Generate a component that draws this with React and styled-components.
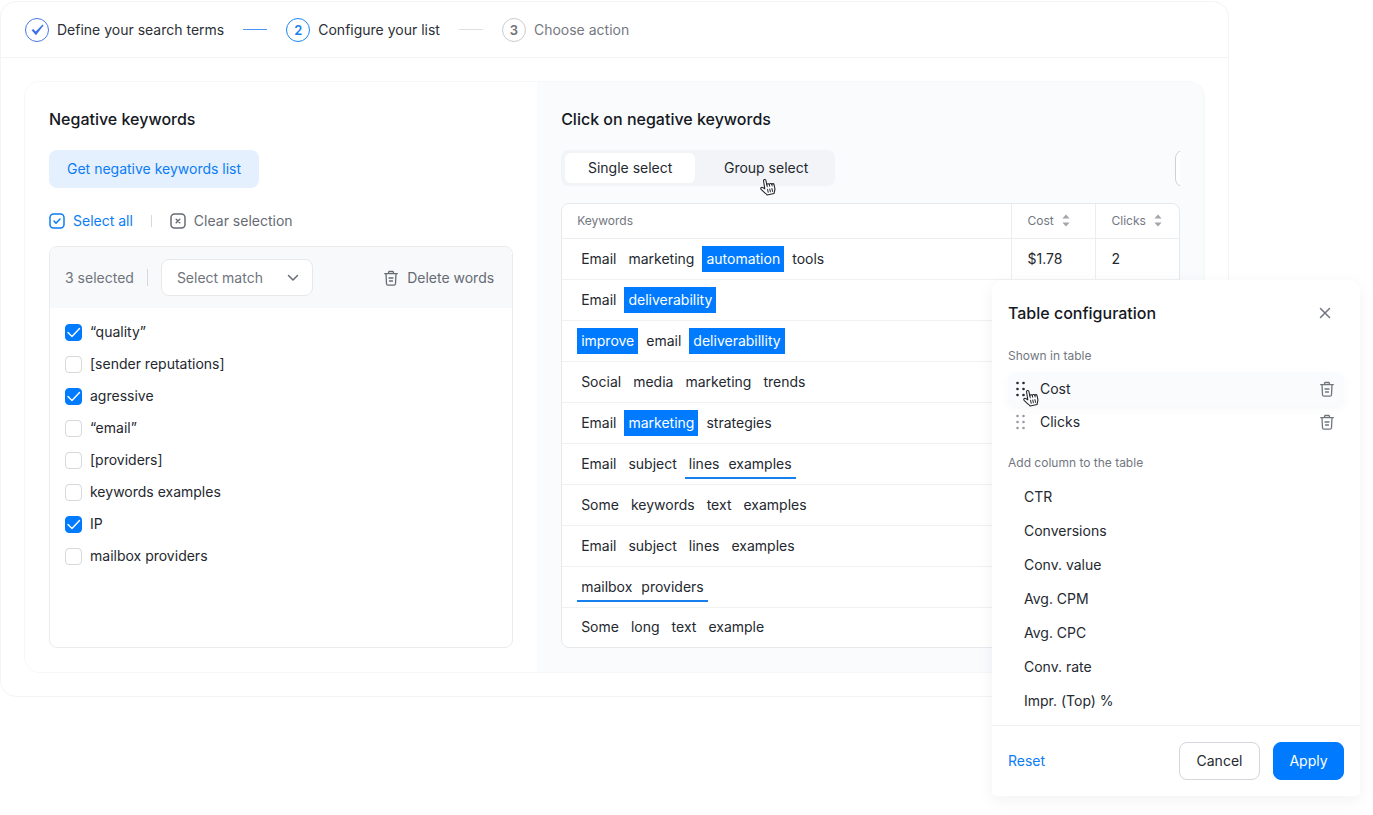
import React from "react";
import styled, { createGlobalStyle } from "styled-components";

const GlobalStyle = createGlobalStyle`
  *, *::before, *::after { box-sizing: border-box; }
  body {
    margin: 0;
    background: #fff;
    color: #24282f;
    font: 400 14px/20px Inter, "Liberation Sans", sans-serif;
  }
  button, select, input { font: inherit; margin: 0; }
  button { border: 0; padding: 0; background: none; color: inherit; white-space: nowrap; }
  h2, p, ul, ol { margin: 0; padding: 0; list-style: none; }
`;

const Page = styled.div`
  position: relative;
  padding: 1px 144px 118px 0;
`;

const Window = styled.main`
  border: 1px solid #f3f4f5;
  border-radius: 16px;
`;

const Steps = styled.ol`
  display: flex;
  align-items: center;
  gap: 19px;
  height: 56px;
  padding: 0 24px;
  border-bottom: 1px solid #f3f4f5;
`;

const Step = styled.li`
  display: flex;
  align-items: center;
  gap: 8px;
  font-size: 14px;
  color: ${(p) => (p.$muted ? "#75797f" : "#2b2f36")};
`;

const StepMark = styled.span`
  display: grid;
  place-items: center;
  width: 24px;
  height: 24px;
  border: 1px solid ${(p) => (p.$muted ? "#c9cbce" : p.$done ? "#4a76e8" : "#1a86f5")};
  border-radius: 50%;
  color: ${(p) => (p.$muted ? "#6d7178" : "#1a80f0")};
  font-size: 13px;
  font-weight: 600;
`;

const StepLine = styled.li`
  width: 24px;
  height: 1px;
  background: ${(p) => (p.$muted ? "#dcdfe2" : "#4a94f5")};
`;

const Workspace = styled.div`
  display: grid;
  grid-template-columns: 513fr 668fr;
  margin: 23px;
  border: 1px solid #f6f7f8;
  border-radius: 16px;
  overflow: hidden;
`;

const Pane = styled.section`
  display: flex;
  flex-direction: column;
  min-width: 0;
  padding: 24px;
  background: ${(p) => (p.$tinted ? "#f9fbfd" : "#fff")};
`;

const Heading = styled.h2`
  font-size: 16px;
  font-weight: 500;
  line-height: 26px;
  color: #15181e;
`;

const ListButton = styled.button`
  align-self: flex-start;
  height: 38px;
  margin-top: 18px;
  padding: 0 18px;
  border-radius: 8px;
  background: #e5f0fe;
  color: #0a7cf5;
`;

const Actions = styled.div`
  display: flex;
  align-items: center;
  gap: 18px;
  height: 24px;
  margin: 21px 0 13px;
`;

const IconButton = styled.button`
  display: flex;
  align-items: center;
  gap: 8px;
  color: ${(p) => (p.$primary ? "#0a7cf5" : "#666b74")};
`;

const Divider = styled.span`
  width: 1px;
  height: ${(p) => (p.$tall ? "17px" : "12px")};
  background: #d5d8dc;
`;

const WordBox = styled.div`
  flex: 1;
  border: 1px solid #e9ebed;
  border-radius: 8px;
  overflow: hidden;
`;

const WordTools = styled.div`
  display: flex;
  align-items: center;
  gap: 13px;
  height: 61px;
  padding: 0 18px 0 15px;
  background: #f7f9fb;
  color: #6f747c;

  > :last-child { margin-left: auto; }
`;

const SelectWrap = styled.label`
  position: relative;
  display: block;

  svg {
    position: absolute;
    right: 14px;
    top: 15px;
    pointer-events: none;
  }
`;

const Select = styled.select`
  appearance: none;
  display: block;
  width: 152px;
  height: 37px;
  padding: 0 36px 0 15px;
  border: 1px solid #e6e8ea;
  border-radius: 8px;
  background: #fff;
  color: #6f747c;
`;

const WordList = styled.ul`
  padding: 8px 15px;
`;

const WordLabel = styled.label`
  display: flex;
  align-items: center;
  gap: 8px;
  height: 32px;
`;

const CheckWrap = styled.span`
  display: grid;
  width: 17px;
  height: 17px;

  > * { grid-area: 1 / 1; }
  svg { pointer-events: none; z-index: 1; }
`;

const Check = styled.input`
  appearance: none;
  width: 17px;
  height: 17px;
  border: 1px solid #d5d8dc;
  border-radius: 4px;
  background: #fff;

  &:checked { border-color: #007bff; background: #007bff; }
  & + svg { display: none; }
  &:checked + svg { display: block; }
`;

const ModeBar = styled.div`
  display: flex;
  justify-content: space-between;
  align-items: flex-start;
  height: 37px;
  margin: 18px 0 16px;
`;

const Segments = styled.div`
  display: flex;
  padding: 3px 4px;
  border-radius: 8px;
  background: #f2f4f7;
`;

const Segment = styled.button`
  position: relative;
  width: ${(p) => (p.$active ? "130px" : "136px")};
  height: 30px;
  border-radius: 6px;
  background: ${(p) => (p.$active ? "#fff" : "transparent")};
  ${(p) => !p.$active && "padding-left: 6px;"}
`;

const MoreClip = styled.div`
  width: 5px;
  overflow: hidden;
`;

const MoreButton = styled.button`
  display: block;
  width: 38px;
  height: 37px;
  border: 1px solid #ced1d5;
  border-radius: 8px;
  background: #fff;
`;

const TableBox = styled.div`
  border: 1px solid #e6e9ec;
  border-radius: 8px;
  background: #fff;
  overflow: hidden;
`;

const Table = styled.table`
  width: 100%;
  border-collapse: collapse;
  table-layout: fixed;

  th, td {
    padding: 0 16px;
    text-align: left;
    font-weight: 400;
  }
  th {
    height: 34px;
    border-bottom: 1px solid #ebedef;
    color: #72777f;
    font-size: 12px;
  }
  td { height: 41px; border-bottom: 1px solid #f0f1f3; }
  th + th, td + td { border-left: 1px solid #ebedef; }
  td:first-child, th:first-child { padding: 0 15px; }
  tr:last-child td { height: 40px; border-bottom: 0; }
`;

const Column = styled.col`
  width: ${(p) => (p.$narrow ? "84px" : "auto")};
`;

const Sort = styled.button`
  display: flex;
  align-items: center;
  gap: 8px;
`;

const Phrase = styled.div`
  display: flex;
  align-items: center;
  gap: 4px;
`;

const Word = styled.button`
  height: 26px;
  padding: 0 4px;
  background: ${(p) => (p.$on ? "#007bff" : "transparent")};
  color: ${(p) => (p.$on ? "#fff" : "inherit")};
`;

const WordGroup = styled.button`
  display: flex;
  align-items: center;
  gap: 9px;
  height: 30px;
  padding: 0 4px;
  border: solid transparent;
  border-width: 2px 0;
  border-bottom-color: #1580ee;
`;

const Dialog = styled.section`
  position: absolute;
  top: 280px;
  right: 13px;
  width: 368px;
  border-radius: 12px 12px 4px 4px;
  background: #fff;
  box-shadow: 0 4px 16px rgba(30, 40, 60, 0.06);
`;

const DialogHead = styled.header`
  display: flex;
  align-items: center;
  justify-content: space-between;
  height: 66px;
  padding: 0 29px 0 16px;
`;

const DialogBody = styled.div`
  padding: 0 16px 7px;
`;

const Caption = styled.p`
  font-size: 12px;
  color: #72777f;
`;

const Shown = styled.ul`
  padding: 6px 0 15px;
`;

const ShownRow = styled.li`
  position: relative;
  display: flex;
  align-items: center;
  height: 33px;
  padding: 0 9px 0 8px;
  border-radius: 8px;
  background: ${(p) => (p.$active ? "#fafbfd" : "transparent")};
  box-shadow: ${(p) => (p.$active ? "0 4px 8px rgba(60, 80, 110, 0.04)" : "none")};
  color: ${(p) => (p.$active ? "#24282f" : "#969ba3")};
`;

const ShownName = styled.span`
  flex: 1;
  margin-left: 15px;
  color: #24282f;
`;

const RemoveButton = styled.button`
  display: flex;
  color: #70757d;
`;

const Options = styled.ul`
  padding-top: 7px;
`;

const Option = styled.button`
  display: block;
  width: 100%;
  height: 34px;
  padding-left: 16px;
  text-align: left;
`;

const DialogFoot = styled.footer`
  display: flex;
  align-items: center;
  gap: 13px;
  padding: 16px;
  border-top: 1px solid #eff0f2;
`;

const Reset = styled.button`
  margin-right: auto;
  color: #0a7cf5;
`;

const FootButton = styled.button`
  width: ${(p) => (p.$primary ? "71px" : "81px")};
  height: 38px;
  border: 1px solid ${(p) => (p.$primary ? "#007bff" : "#d3d6da")};
  border-radius: 8px;
  background: ${(p) => (p.$primary ? "#007bff" : "#fff")};
  color: ${(p) => (p.$primary ? "#fff" : "#24282f")};
`;

const Pointer = styled.svg`
  position: absolute;
  left: ${(p) => p.$left};
  top: ${(p) => p.$top};
  z-index: 2;
`;

const Hand = (props) => (
  <Pointer width="18" height="19" viewBox="0 0 18 19" fill="none" aria-hidden="true" {...props}>
    <g transform="rotate(-12 9 9.500)">
      <path
        d="M5.400 11.200 4 9.700c-.7-.7-1.600-.9-2.200-.3-.5.500-.4 1.200 0 1.800l3 4.100c.5.800 1.300 1.300 1.500 2.300h7.200c.1-1.300 1.800-2.900 1.800-4.800V8.900c0-1.400-1.800-1.600-2.100-.5 0-1.500-2.200-1.700-2.500-.5-.2-1.300-2.300-1.400-2.500-.2V3.200c0-1.700-2.400-1.700-2.400 0z"
        fill="#fff"
        stroke="#22252a"
        strokeWidth="1.100"
        strokeLinejoin="round"
      />
      <path d="M8.200 7.600v2M10.700 8v1.600M13.200 8.400v1.400M8 12.200v3M10.200 12.200v3M12.400 12.200v3" stroke="#22252a" strokeLinecap="round" />
    </g>
  </Pointer>
);

const Trash = () => (
  <svg width="16" height="16" viewBox="0 0 16 16" fill="none" stroke="currentColor" strokeWidth="1.300" strokeLinecap="round" strokeLinejoin="round" aria-hidden="true">
    <path d="M1.700 3.600h12.600M5.300 3.400l.6-1.900h4.200l.6 1.900M3 3.800l.5 9.900c.1 1 .6 1.500 1.500 1.500h6c.9 0 1.400-.5 1.500-1.500l.5-9.900M6 8h4M6.500 11h3" />
  </svg>
);

const BoxIcon = ({ cross }) => (
  <svg width="16" height="16" viewBox="0 0 16 16" fill="none" stroke="currentColor" strokeWidth="1.500" strokeLinecap="round" strokeLinejoin="round" aria-hidden="true">
    <rect x="1" y="1" width="14" height="14" rx="3.500" />
    <path d={cross ? "m6.200 6.200 3.600 3.600m0-3.600-3.600 3.600" : "m5 8 2 2.200L11 6"} />
  </svg>
);

const SortIcon = () => (
  <svg width="8" height="13" viewBox="0 0 8 13" fill="#a2a5aa" aria-hidden="true">
    <path d="M4 .4 7.600 4.600H.4zM4 12.600.4 8.400h7.200z" />
  </svg>
);

const Grip = () => (
  <svg width="9" height="16" viewBox="0 0 9 16" fill="currentColor" aria-hidden="true">
    {[2, 8, 14].map((y) => (
      <React.Fragment key={y}>
        <circle cx="1.500" cy={y} r="1.300" />
        <circle cx="7.500" cy={y} r="1.300" />
      </React.Fragment>
    ))}
  </svg>
);

const words = [
  ["“quality”", true],
  ["[sender reputations]", false],
  ["agressive", true],
  ["“email”", false],
  ["[providers]", false],
  ["keywords examples", false],
  ["IP", true],
  ["mailbox providers", false],
];

// "*" marks a selected word, an array is a selected group of words.
const phrases = [
  ["Email", "marketing", "*automation", "tools"],
  ["Email", "*deliverability"],
  ["*improve", "email", "*deliverabillity"],
  ["Social", "media", "marketing", "trends"],
  ["Email", "*marketing", "strategies"],
  ["Email", "subject", ["lines", "examples"]],
  ["Some", "keywords", "text", "examples"],
  ["Email", "subject", "lines", "examples"],
  [["mailbox", "providers"]],
  ["Some", "long", "text", "example"],
];

const columns = ["CTR", "Conversions", "Conv. value", "Avg. CPM", "Avg. CPC", "Conv. rate", "Impr. (Top) %"];

export default function App() {
  return (
    <>
      <GlobalStyle />
      <Page>
        <Window>
          <Steps>
            <Step>
              <StepMark $done>
                <svg width="13" height="12" viewBox="0 0 13 12" aria-hidden="true">
                  <path d="M.6 6.200 2.200 5l2.500 2.600L11.600.6l1 .7-7.600 9.900z" fill="#3c70e8" />
                </svg>
              </StepMark>
              Define your search terms
            </Step>
            <StepLine aria-hidden="true" />
            <Step>
              <StepMark>2</StepMark>
              Configure your list
            </Step>
            <StepLine $muted aria-hidden="true" />
            <Step $muted>
              <StepMark $muted>3</StepMark>
              Choose action
            </Step>
          </Steps>
          <Workspace>
            <Pane>
              <Heading>Negative keywords</Heading>
              <ListButton>Get negative keywords list</ListButton>
              <Actions>
                <IconButton $primary><BoxIcon />Select all</IconButton>
                <Divider />
                <IconButton><BoxIcon cross />Clear selection</IconButton>
              </Actions>
              <WordBox>
                <WordTools>
                  <span>3 selected</span>
                  <Divider $tall />
                  <SelectWrap>
                    <Select aria-label="Select match">
                      <option>Select match</option>
                    </Select>
                    <svg width="12" height="8" viewBox="0 0 12 8" fill="none" stroke="#666b74" strokeWidth="1.500" strokeLinecap="round" strokeLinejoin="round" aria-hidden="true">
                      <path d="m1.500 1.500 4.500 4.500 4.500-4.500" />
                    </svg>
                  </SelectWrap>
                  <IconButton><Trash />Delete words</IconButton>
                </WordTools>
                <WordList>
                  {words.map(([text, checked]) => (
                    <li key={text}>
                      <WordLabel>
                        <CheckWrap>
                          <Check type="checkbox" defaultChecked={checked} />
                          <svg width="17" height="17" viewBox="0 0 17 17" fill="none" stroke="#fff" strokeWidth="1.400" strokeLinecap="round" strokeLinejoin="round" aria-hidden="true">
                            <path d="m3 8.500 4 4 7.500-8" />
                          </svg>
                        </CheckWrap>
                        {text}
                      </WordLabel>
                    </li>
                  ))}
                </WordList>
              </WordBox>
            </Pane>
            <Pane $tinted>
              <Heading>Click on negative keywords</Heading>
              <ModeBar>
                <Segments>
                  <Segment $active aria-pressed="true">Single select</Segment>
                  <Segment aria-pressed="false">
                    Group select
                    <Hand $left="64px" $top="24px" />
                  </Segment>
                </Segments>
                <MoreClip><MoreButton aria-label="Table settings" /></MoreClip>
              </ModeBar>
              <TableBox>
                <Table>
                  <colgroup>
                    <Column />
                    <Column $narrow />
                    <Column $narrow />
                  </colgroup>
                  <thead>
                    <tr>
                      <th>Keywords</th>
                      <th><Sort>Cost<SortIcon /></Sort></th>
                      <th><Sort>Clicks<SortIcon /></Sort></th>
                    </tr>
                  </thead>
                  <tbody>
                    {phrases.map((phrase, row) => (
                      <tr key={row}>
                        <td>
                          <Phrase>
                            {phrase.map((word, i) =>
                              Array.isArray(word) ? (
                                <WordGroup key={i}>
                                  {word.map((w) => <span key={w}>{w}</span>)}
                                </WordGroup>
                              ) : (
                                <Word key={i} $on={word[0] === "*"}>{word.replace("*", "")}</Word>
                              )
                            )}
                          </Phrase>
                        </td>
                        <td>{row === 0 && "$1.78"}</td>
                        <td>{row === 0 && "2"}</td>
                      </tr>
                    ))}
                  </tbody>
                </Table>
              </TableBox>
            </Pane>
          </Workspace>
        </Window>
        <Dialog role="dialog" aria-labelledby="config-title">
          <DialogHead>
            <Heading id="config-title">Table configuration</Heading>
            <RemoveButton aria-label="Close">
              <svg width="12" height="12" viewBox="0 0 12 12" fill="none" stroke="currentColor" strokeWidth="1.500" strokeLinecap="round" aria-hidden="true">
                <path d="m1.500 1.500 9 9m0-9-9 9" />
              </svg>
            </RemoveButton>
          </DialogHead>
          <DialogBody>
            <Caption>Shown in table</Caption>
            <Shown>
              <ShownRow $active>
                <Grip />
                <ShownName>Cost</ShownName>
                <RemoveButton aria-label="Remove Cost"><Trash /></RemoveButton>
                <Hand $left="14px" $top="16px" />
              </ShownRow>
              <ShownRow>
                <Grip />
                <ShownName>Clicks</ShownName>
                <RemoveButton aria-label="Remove Clicks"><Trash /></RemoveButton>
              </ShownRow>
            </Shown>
            <Caption>Add column to the table</Caption>
            <Options>
              {columns.map((name) => (
                <li key={name}><Option>{name}</Option></li>
              ))}
            </Options>
          </DialogBody>
          <DialogFoot>
            <Reset>Reset</Reset>
            <FootButton>Cancel</FootButton>
            <FootButton $primary>Apply</FootButton>
          </DialogFoot>
        </Dialog>
      </Page>
    </>
  );
}
